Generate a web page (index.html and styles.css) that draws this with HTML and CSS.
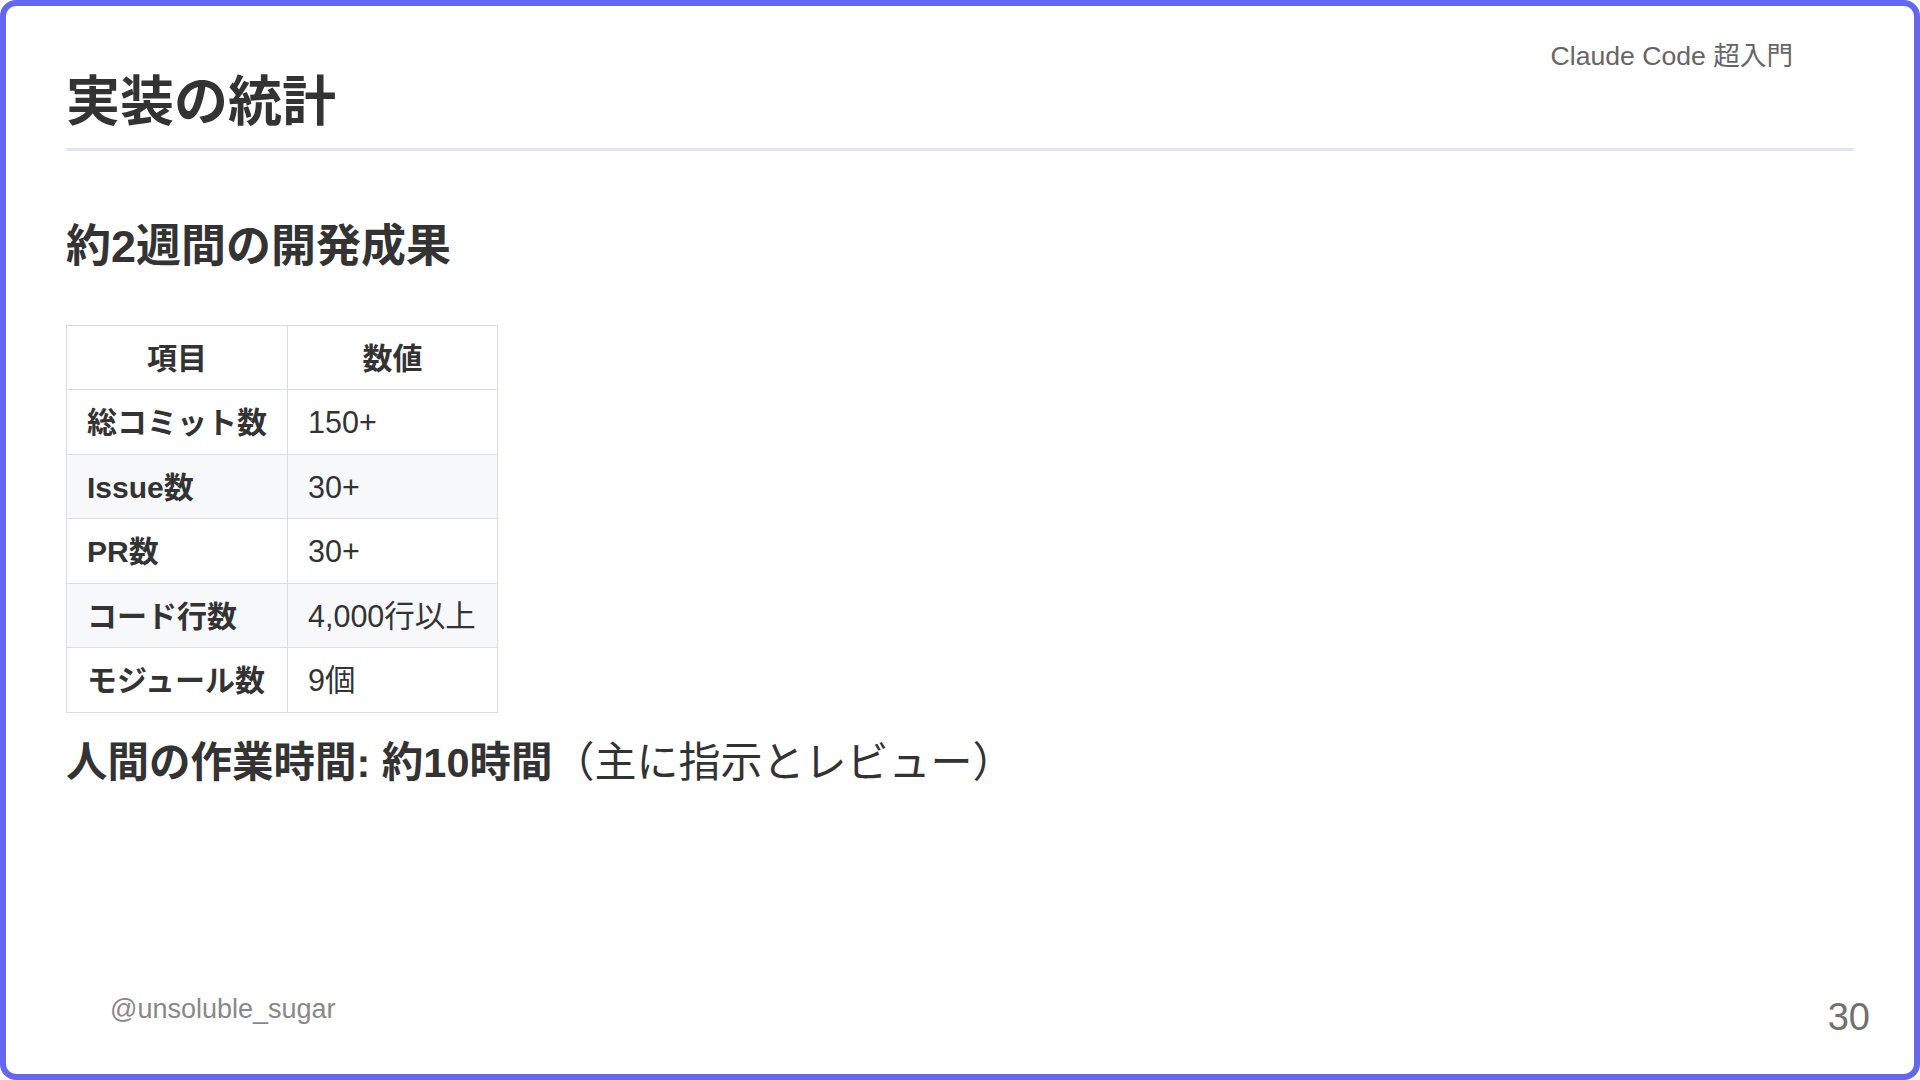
FILE: index.html
```html
<!DOCTYPE html>
<html lang="ja">
<head>
    <meta charset="UTF-8">
    <meta name="viewport" content="width=device-width, initial-scale=1.0">
    <title>実装の統計</title>
    <link rel="stylesheet" href="styles.css">
</head>
<body>

<div class="slide">
    <header class="slide-header">Claude Code 超入門</header>

    <section class="content">
        <h1>実装の統計</h1>

        <h2>約2週間の開発成果</h2>

        <table class="stats">
            <thead>
                <tr>
                    <th>項目</th>
                    <th>数値</th>
                </tr>
            </thead>
            <tbody>
                <tr>
                    <td><strong>総コミット数</strong></td>
                    <td>150+</td>
                </tr>
                <tr>
                    <td><strong>Issue数</strong></td>
                    <td>30+</td>
                </tr>
                <tr>
                    <td><strong>PR数</strong></td>
                    <td>30+</td>
                </tr>
                <tr>
                    <td><strong>コード行数</strong></td>
                    <td>4,000行以上</td>
                </tr>
                <tr>
                    <td><strong>モジュール数</strong></td>
                    <td>9個</td>
                </tr>
            </tbody>
        </table>

        <p class="summary"><strong>人間の作業時間: 約10時間</strong>（主に指示とレビュー）</p>
    </section>

    <footer class="slide-footer">
        <span class="author">@unsoluble_sugar</span>
        <span class="page-num">30</span>
    </footer>
</div>

</body>
</html>
```

FILE: styles.css
```css
body {
    font-family: 'Liberation Sans', 'Noto Sans CJK JP', sans-serif;
    background-color: #ffffff;
    margin: 0;
    padding: 0;
    color: #333;
}

.slide {
    width: 1920px;
    height: 1080px;
    box-sizing: border-box;
    border: 6px solid #6366f1;
    border-radius: 16px;
    background-color: #ffffff;
    display: flex;
    flex-direction: column;
}

.slide-header {
    display: flex;
    justify-content: flex-end;
    padding: 37px 121px 0 0;
    font-size: 26.6px;
    line-height: 27px;
    color: #666;
}

.content {
    padding: 0 60px;
}

h1 {
    margin: 0;
    padding-bottom: 13px;
    font-size: 54px;
    line-height: 1.2;
    font-weight: bold;
    border-bottom: 3px solid #e1e4f5;
}

h2 {
    margin: 69px 0 0;
    font-size: 45px;
    line-height: 1.2;
    font-weight: bold;
}

.stats {
    margin-top: 51px;
    border-collapse: collapse;
    font-size: 30px;
    line-height: 43.5px;
}

.stats th,
.stats td {
    border: 1px solid #d8dee4;
    padding: 11px 20px 9px;
    text-align: left;
}

.stats td:last-child {
    font-size: 30.5px;
    padding-right: 21px;
}

.stats th {
    text-align: center;
    font-weight: bold;
}

.stats tbody tr:nth-child(even) {
    background-color: #f6f8fa;
}

.summary {
    margin: 25px 0 0;
    font-size: 42px;
    line-height: 1.2;
}

.summary strong {
    font-size: 41.5px;
}

.slide-footer {
    margin-top: auto;
    display: flex;
    justify-content: space-between;
    align-items: flex-end;
    padding: 0 44px 38px 104px;
}

.author {
    font-size: 27px;
    line-height: 27px;
    color: #888;
    margin-bottom: 13px;
}

.page-num {
    font-size: 38px;
    line-height: 38px;
    color: #707070;
}
```
